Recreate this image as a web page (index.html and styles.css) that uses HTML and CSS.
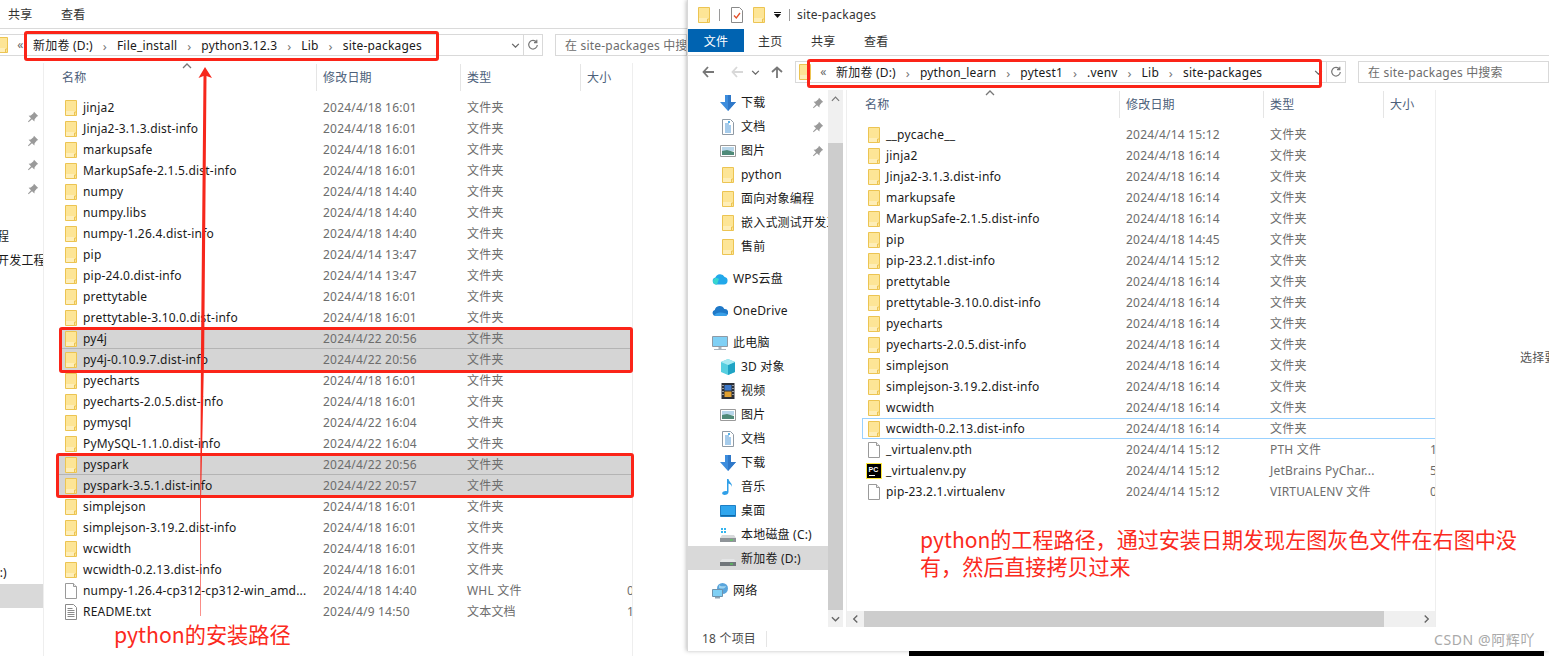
FILE: index.html
```html
<!DOCTYPE html>
<html lang="zh-CN">
<head>
<meta charset="utf-8">
<title>site-packages</title>
<link rel="stylesheet" href="styles.css">
</head>
<body>
<svg class="defs" width="0" height="0" aria-hidden="true">
  <symbol id="folder" viewBox="0 0 12 16"><path d="M.5.5h11v15H.5z" fill="#fde596" stroke="#ecc452"/><path d="M1 11h9v4H1z" fill="#feeeb8"/><path d="M9.5 15v-3h2" fill="none" stroke="#ecc452"/></symbol>
  <symbol id="file" viewBox="0 0 12 16"><path d="M.5.5h8l3 3v12H.5z" fill="#fff" stroke="#9a9a9a"/><path d="M8.5.5v3h3" fill="#eee" stroke="#9a9a9a"/></symbol>
  <symbol id="txt" viewBox="0 0 12 16"><path d="M.5.5h8l3 3v12H.5z" fill="#fff" stroke="#8a8a8a"/><path d="M2.5 4.5h5M2.5 6.5h7M2.5 8.5h7M2.5 10.5h7M2.5 12.5h7" stroke="#8a8a8a"/></symbol>
  <symbol id="pin" viewBox="0 0 12 12"><path d="M7 .8l4.2 4.2-1.3.6-2.3 2.6-.2 2.2L5 8.2 1.6 11.2 1 10.6l3-3.4L1.6 4.8l2.2-.2 2.6-2.3z" fill="#9a9a9a"/></symbol>
  <symbol id="dl" viewBox="0 0 16 16"><path d="M5 0h6v7h5l-8 9-8-9h5z" fill="#3d8ddd"/><path d="M8 0h3v7h5l-8 9z" fill="#2f78c8"/></symbol>
  <symbol id="doc" viewBox="0 0 16 16"><path d="M2.5.5h8l3 3v12h-11z" fill="#fff" stroke="#8f9aa5"/><path d="M5 5h4M5 7h6M5 9h6M5 11h6M5 13h6" stroke="#4d97d6"/><path d="M8 2h2v2H8z" fill="#58b0e6"/></symbol>
  <symbol id="pic" viewBox="0 0 16 16"><path d="M.5 2.5h15v11H.5z" fill="#fff" stroke="#9a9a9a"/><path d="M2 4h12v4H2z" fill="#b8d6ea"/><path d="M2 8l5-1 7 2v3H2z" fill="#4f8a78"/></symbol>
  <symbol id="wps" viewBox="0 0 16 12"><path d="M4 11.5a3.5 3.5 0 0 1-.6-6.9A5 5 0 0 1 12.6 4 3.8 3.8 0 0 1 12 11.5z" fill="#22a8ea"/><path d="M1 8a3.5 3.5 0 0 1 6-2l-2 5.500H4A3.500 3.500 0 0 1 1 8z" fill="#38d6d0"/></symbol>
  <symbol id="onedrive" viewBox="0 0 16 11"><path d="M3.500 10.500a3 3 0 0 1-.7-5.900A5 5 0 0 1 12.300 3.500a3.500 3.500 0 0 1 .7 7z" fill="#1f79c8"/><path d="M2 10c2-3 6-4 12-2 2 1 1 2.500-1 2.500H3.500z" fill="#3aa0e8"/></symbol>
  <symbol id="pc" viewBox="0 0 16 16"><path d="M.5 1.500h15v10H.5z" fill="#7fd0f5" stroke="#8f9aa5"/><path d="M6.500 12h3v2h-3z" fill="#a9b4bd"/><path d="M2 14h12v1H2z" fill="#a9b4bd"/></symbol>
  <symbol id="cube" viewBox="0 0 16 16"><path d="M8 0l7 3v10l-7 3-7-3V3z" fill="#56cfe0"/><path d="M8 6l7-3v10l-7 3z" fill="#1fa3c4"/><path d="M8 0l7 3-7 3-7-3z" fill="#a6eaf2"/></symbol>
  <symbol id="video" viewBox="0 0 16 16"><path d="M1.500 0h13v16h-13z" fill="#2c3038"/><path d="M4.500 2h7v5.500h-7z" fill="#3d78c9"/><path d="M4.500 8.500h7V14h-7z" fill="#e0a030"/><path d="M2.500 2h1v1h-1zM2.500 5h1v1h-1zM2.500 8h1v1h-1zM2.500 11h1v1h-1zM12.500 2h1v1h-1zM12.500 5h1v1h-1zM12.500 8h1v1h-1zM12.500 11h1v1h-1z" fill="#fff"/></symbol>
  <symbol id="music" viewBox="0 0 16 16"><path d="M7 0h1.500c.5 3 4 4 3.500 8-.2-1.800-1.800-3-3.500-3.500V13c0 2-2 3-4 3-2.500 0-3-2-1.500-3.200C4.200 12 6 11.800 7 12.300z" fill="#2f9fe8"/></symbol>
  <symbol id="desk" viewBox="0 0 16 16"><path d="M.5 2.500h15v11H.5z" fill="#2fa6ee" stroke="#1f7fc4"/><path d="M1 12h14v1H1z" fill="#0f6aa8"/></symbol>
  <symbol id="diskc" viewBox="0 0 16 16"><path d="M1 1h2v2H1zM4 1h2v2H4zM1 4h2v2H1zM4 4h2v2H4z" fill="#33b5f0"/><path d="M2 8h12l2 3H0z" fill="#d8dadc"/><path d="M0 11h16v4H0z" fill="#8f9499"/><path d="M10 12.500h3v1h-3z" fill="#4be04b"/></symbol>
  <symbol id="diskd" viewBox="0 0 16 16"><path d="M2 8h12l2 3H0z" fill="#e4e5e6"/><path d="M0 11h16v4H0z" fill="#70757a"/><path d="M10 12.500h3v1h-3z" fill="#4be04b"/></symbol>
  <symbol id="net" viewBox="0 0 16 16"><circle cx="10.500" cy="5.500" r="5.500" fill="#5aa5dc"/><path d="M7 2c2 2 5 1 7 1-1 3-4 3-7 2z" fill="#9ed4f0"/><path d="M.5 6.500h10v7H.5z" fill="#7fd0f5" stroke="#6f93ad"/><path d="M3 14h5v1.500H3z" fill="#8da3b3"/></symbol>
  <symbol id="up" viewBox="0 0 10 6"><path d="M1 5l4-4 4 4" fill="none" stroke="#777" stroke-width="1.300"/></symbol>
  <symbol id="down" viewBox="0 0 10 6"><path d="M1 1l4 4 4-4" fill="none" stroke="#666" stroke-width="1.500"/></symbol>
  <symbol id="back" viewBox="0 0 12 12"><path d="M6 1L1.500 6 6 11M1.500 6H12" fill="none" stroke="currentColor" stroke-width="1.800"/></symbol>
  <symbol id="upa" viewBox="0 0 12 12"><path d="M1 6l5-4.500L11 6M6 1.500V12" fill="none" stroke="#777" stroke-width="1.800"/></symbol>
  <symbol id="refresh" viewBox="0 0 12 12"><path d="M9.500 3.200A4.300 4.300 0 1 0 10.300 6M9.800 .8v2.800H7" fill="none" stroke="#777" stroke-width="1.200"/></symbol>
  <symbol id="check" viewBox="0 0 12 16"><path d="M.5.5h8l3 3v12H.5z" fill="#fff" stroke="#8a8a8a"/><path d="M3 8.500l2.300 2.500L9 6" fill="none" stroke="#e2502a" stroke-width="1.300"/></symbol>
  <symbol id="qat" viewBox="0 0 9 6"><path d="M1 0h7v1H1zM1 2h7L4.500 6z" fill="#111"/></symbol>
</svg>

<section class="window window-left">
  <div class="titlebar"></div>
  <div class="tabs">
    <span class="tab tab-file tab-off"></span><span class="tab"></span><span class="tab">共享</span><span class="tab">查看</span>
  </div>
  <div class="toolbar">
    <div class="tool-nav"></div>
    <div class="address">
      <svg class="addr-folder"><use href="#folder"/></svg>
      <span class="addr-more">«</span>
      <div class="crumbs">
        <span>新加卷 (D:)</span><i>›</i><span>File_install</span><i>›</i><span>python3.12.3</span><i>›</i><span>Lib</span><i>›</i><span>site-packages</span>
      </div>
      <svg class="addr-drop"><use href="#down"/></svg>
      <span class="addr-refresh"><svg><use href="#refresh"/></svg></span>
    </div>
    <div class="search">在 site-packages 中搜索</div>
  </div>
  <div class="main">
    <nav class="nav nav-left">
      <div class="nav-row"><svg class="pin"><use href="#pin"/></svg></div>
      <div class="nav-row"><svg class="pin"><use href="#pin"/></svg></div>
      <div class="nav-row"><svg class="pin"><use href="#pin"/></svg></div>
      <div class="nav-row"><svg class="pin"><use href="#pin"/></svg></div>
      <div class="nav-row"></div>
      <div class="nav-row"><span>面向对象编程</span></div>
      <div class="nav-row"><span>嵌入式测试开发工程</span></div>
      <div class="nav-row"></div>
      <div class="nav-row nav-gap"></div>
      <div class="nav-row nav-gap"></div>
      <div class="nav-row nav-gap"></div>
      <div class="nav-row"></div>
      <div class="nav-row"></div>
      <div class="nav-row"></div>
      <div class="nav-row"></div>
      <div class="nav-row"></div>
      <div class="nav-row"></div>
      <div class="nav-row"></div>
      <div class="nav-row"><span>本地磁盘 (C:)</span></div>
      <div class="nav-row nav-sel"></div>
    </nav>
    <div class="content">
      <div class="head">
        <span class="hcell hcell-name">名称<svg class="sort"><use href="#up"/></svg></span><span class="hcell hcell-date">修改日期</span><span class="hcell hcell-type">类型</span><span class="hcell hcell-size">大小</span>
      </div>
      <div class="list">
        <div class="row"><span class="name"><svg class="ic"><use href="#folder"/></svg>jinja2</span><span class="meta">2024/4/18 16:01</span><span class="meta">文件夹</span></div>
        <div class="row"><span class="name"><svg class="ic"><use href="#folder"/></svg>Jinja2-3.1.3.dist-info</span><span class="meta">2024/4/18 16:01</span><span class="meta">文件夹</span></div>
        <div class="row"><span class="name"><svg class="ic"><use href="#folder"/></svg>markupsafe</span><span class="meta">2024/4/18 16:01</span><span class="meta">文件夹</span></div>
        <div class="row"><span class="name"><svg class="ic"><use href="#folder"/></svg>MarkupSafe-2.1.5.dist-info</span><span class="meta">2024/4/18 16:01</span><span class="meta">文件夹</span></div>
        <div class="row"><span class="name"><svg class="ic"><use href="#folder"/></svg>numpy</span><span class="meta">2024/4/18 14:40</span><span class="meta">文件夹</span></div>
        <div class="row"><span class="name"><svg class="ic"><use href="#folder"/></svg>numpy.libs</span><span class="meta">2024/4/18 14:40</span><span class="meta">文件夹</span></div>
        <div class="row"><span class="name"><svg class="ic"><use href="#folder"/></svg>numpy-1.26.4.dist-info</span><span class="meta">2024/4/18 14:40</span><span class="meta">文件夹</span></div>
        <div class="row"><span class="name"><svg class="ic"><use href="#folder"/></svg>pip</span><span class="meta">2024/4/14 13:47</span><span class="meta">文件夹</span></div>
        <div class="row"><span class="name"><svg class="ic"><use href="#folder"/></svg>pip-24.0.dist-info</span><span class="meta">2024/4/14 13:47</span><span class="meta">文件夹</span></div>
        <div class="row"><span class="name"><svg class="ic"><use href="#folder"/></svg>prettytable</span><span class="meta">2024/4/18 16:01</span><span class="meta">文件夹</span></div>
        <div class="row"><span class="name"><svg class="ic"><use href="#folder"/></svg>prettytable-3.10.0.dist-info</span><span class="meta">2024/4/18 16:01</span><span class="meta">文件夹</span></div>
        <div class="row row-sel row-sel-split"><span class="name"><svg class="ic"><use href="#folder"/></svg>py4j</span><span class="meta">2024/4/22 20:56</span><span class="meta">文件夹</span></div>
        <div class="row row-sel"><span class="name"><svg class="ic"><use href="#folder"/></svg>py4j-0.10.9.7.dist-info</span><span class="meta">2024/4/22 20:56</span><span class="meta">文件夹</span></div>
        <div class="row"><span class="name"><svg class="ic"><use href="#folder"/></svg>pyecharts</span><span class="meta">2024/4/18 16:01</span><span class="meta">文件夹</span></div>
        <div class="row"><span class="name"><svg class="ic"><use href="#folder"/></svg>pyecharts-2.0.5.dist-info</span><span class="meta">2024/4/18 16:01</span><span class="meta">文件夹</span></div>
        <div class="row"><span class="name"><svg class="ic"><use href="#folder"/></svg>pymysql</span><span class="meta">2024/4/22 16:04</span><span class="meta">文件夹</span></div>
        <div class="row"><span class="name"><svg class="ic"><use href="#folder"/></svg>PyMySQL-1.1.0.dist-info</span><span class="meta">2024/4/22 16:04</span><span class="meta">文件夹</span></div>
        <div class="row row-sel row-sel-split"><span class="name"><svg class="ic"><use href="#folder"/></svg>pyspark</span><span class="meta">2024/4/22 20:56</span><span class="meta">文件夹</span></div>
        <div class="row row-sel"><span class="name"><svg class="ic"><use href="#folder"/></svg>pyspark-3.5.1.dist-info</span><span class="meta">2024/4/22 20:57</span><span class="meta">文件夹</span></div>
        <div class="row"><span class="name"><svg class="ic"><use href="#folder"/></svg>simplejson</span><span class="meta">2024/4/18 16:01</span><span class="meta">文件夹</span></div>
        <div class="row"><span class="name"><svg class="ic"><use href="#folder"/></svg>simplejson-3.19.2.dist-info</span><span class="meta">2024/4/18 16:01</span><span class="meta">文件夹</span></div>
        <div class="row"><span class="name"><svg class="ic"><use href="#folder"/></svg>wcwidth</span><span class="meta">2024/4/18 16:01</span><span class="meta">文件夹</span></div>
        <div class="row"><span class="name"><svg class="ic"><use href="#folder"/></svg>wcwidth-0.2.13.dist-info</span><span class="meta">2024/4/18 16:01</span><span class="meta">文件夹</span></div>
        <div class="row"><span class="name"><svg class="ic"><use href="#file"/></svg>numpy-1.26.4-cp312-cp312-win_amd...</span><span class="meta">2024/4/18 14:40</span><span class="meta">WHL 文件</span><span class="meta">0</span></div>
        <div class="row"><span class="name"><svg class="ic"><use href="#txt"/></svg>README.txt</span><span class="meta">2024/4/9 14:50</span><span class="meta">文本文档</span><span class="meta">1</span></div>
      </div>
    </div>
  </div>
</section>

<section class="window window-right">
  <div class="titlebar">
    <svg class="ic qat-first"><use href="#folder"/></svg><span class="qat-sep"></span>
    <svg class="ic"><use href="#check"/></svg>
    <svg class="ic"><use href="#folder"/></svg>
    <svg class="qat-arrow"><use href="#qat"/></svg><span class="qat-sep qat-sep-last"></span>
    <span class="title">site-packages</span>
  </div>
  <div class="tabs">
    <span class="tab tab-file">文件</span><span class="tab">主页</span><span class="tab">共享</span><span class="tab">查看</span>
  </div>
  <div class="toolbar">
    <div class="tool-nav">
      <svg class="tn tn-back"><use href="#back"/></svg>
      <svg class="tn tn-fwd"><use href="#back"/></svg>
      <svg class="tn-drop"><use href="#down"/></svg>
      <svg class="tn"><use href="#upa"/></svg>
    </div>
    <div class="address">
      <svg class="addr-folder"><use href="#folder"/></svg>
      <span class="addr-more">«</span>
      <div class="crumbs">
        <span>新加卷 (D:)</span><i>›</i><span>python_learn</span><i>›</i><span>pytest1</span><i>›</i><span>.venv</span><i>›</i><span>Lib</span><i>›</i><span>site-packages</span>
      </div>
      <svg class="addr-drop"><use href="#down"/></svg>
      <span class="addr-refresh"><svg><use href="#refresh"/></svg></span>
    </div>
    <div class="search">在 site-packages 中搜索</div>
  </div>
  <div class="main">
    <nav class="nav nav-right">
      <div class="nav-row lv1"><svg class="ni"><use href="#dl"/></svg><span>下载</span><svg class="pin"><use href="#pin"/></svg></div>
      <div class="nav-row lv1"><svg class="ni"><use href="#doc"/></svg><span>文档</span><svg class="pin"><use href="#pin"/></svg></div>
      <div class="nav-row lv1"><svg class="ni"><use href="#pic"/></svg><span>图片</span><svg class="pin"><use href="#pin"/></svg></div>
      <div class="nav-row lv1"><svg class="ni ni-folder"><use href="#folder"/></svg><span>python</span></div>
      <div class="nav-row lv1"><svg class="ni ni-folder"><use href="#folder"/></svg><span>面向对象编程</span></div>
      <div class="nav-row lv1"><svg class="ni ni-folder"><use href="#folder"/></svg><span>嵌入式测试开发工程</span></div>
      <div class="nav-row lv1"><svg class="ni ni-folder"><use href="#folder"/></svg><span>售前</span></div>
      <div class="nav-row lv0 nav-gap"><svg class="ni"><use href="#wps"/></svg><span>WPS云盘</span></div>
      <div class="nav-row lv0 nav-gap"><svg class="ni"><use href="#onedrive"/></svg><span>OneDrive</span></div>
      <div class="nav-row lv0 nav-gap"><svg class="ni"><use href="#pc"/></svg><span>此电脑</span></div>
      <div class="nav-row lv1"><svg class="ni"><use href="#cube"/></svg><span>3D 对象</span></div>
      <div class="nav-row lv1"><svg class="ni"><use href="#video"/></svg><span>视频</span></div>
      <div class="nav-row lv1"><svg class="ni"><use href="#pic"/></svg><span>图片</span></div>
      <div class="nav-row lv1"><svg class="ni"><use href="#doc"/></svg><span>文档</span></div>
      <div class="nav-row lv1"><svg class="ni"><use href="#dl"/></svg><span>下载</span></div>
      <div class="nav-row lv1"><svg class="ni"><use href="#music"/></svg><span>音乐</span></div>
      <div class="nav-row lv1"><svg class="ni"><use href="#desk"/></svg><span>桌面</span></div>
      <div class="nav-row lv1"><svg class="ni"><use href="#diskc"/></svg><span>本地磁盘 (C:)</span></div>
      <div class="nav-row lv1 nav-sel"><svg class="ni"><use href="#diskd"/></svg><span>新加卷 (D:)</span></div>
      <div class="nav-row lv0 nav-gap"><svg class="ni"><use href="#net"/></svg><span>网络</span></div>
    </nav>
    <div class="vscroll">
      <span class="sb-btn"><svg class="sb-ch"><use href="#up"/></svg></span>
      <span class="sb-track"></span>
      <span class="sb-thumb"></span>
      <span class="sb-btn"><svg class="sb-ch"><use href="#down"/></svg></span>
    </div>
    <div class="content">
      <div class="head">
        <span class="hcell hcell-name">名称<svg class="sort"><use href="#up"/></svg></span><span class="hcell hcell-date">修改日期</span><span class="hcell hcell-type">类型</span><span class="hcell hcell-size">大小</span>
      </div>
      <div class="list">
        <div class="row"><span class="name"><svg class="ic"><use href="#folder"/></svg>__pycache__</span><span class="meta">2024/4/14 15:12</span><span class="meta">文件夹</span></div>
        <div class="row"><span class="name"><svg class="ic"><use href="#folder"/></svg>jinja2</span><span class="meta">2024/4/18 16:14</span><span class="meta">文件夹</span></div>
        <div class="row"><span class="name"><svg class="ic"><use href="#folder"/></svg>Jinja2-3.1.3.dist-info</span><span class="meta">2024/4/18 16:14</span><span class="meta">文件夹</span></div>
        <div class="row"><span class="name"><svg class="ic"><use href="#folder"/></svg>markupsafe</span><span class="meta">2024/4/18 16:14</span><span class="meta">文件夹</span></div>
        <div class="row"><span class="name"><svg class="ic"><use href="#folder"/></svg>MarkupSafe-2.1.5.dist-info</span><span class="meta">2024/4/18 16:14</span><span class="meta">文件夹</span></div>
        <div class="row"><span class="name"><svg class="ic"><use href="#folder"/></svg>pip</span><span class="meta">2024/4/18 14:45</span><span class="meta">文件夹</span></div>
        <div class="row"><span class="name"><svg class="ic"><use href="#folder"/></svg>pip-23.2.1.dist-info</span><span class="meta">2024/4/14 15:12</span><span class="meta">文件夹</span></div>
        <div class="row"><span class="name"><svg class="ic"><use href="#folder"/></svg>prettytable</span><span class="meta">2024/4/18 16:14</span><span class="meta">文件夹</span></div>
        <div class="row"><span class="name"><svg class="ic"><use href="#folder"/></svg>prettytable-3.10.0.dist-info</span><span class="meta">2024/4/18 16:14</span><span class="meta">文件夹</span></div>
        <div class="row"><span class="name"><svg class="ic"><use href="#folder"/></svg>pyecharts</span><span class="meta">2024/4/18 16:14</span><span class="meta">文件夹</span></div>
        <div class="row"><span class="name"><svg class="ic"><use href="#folder"/></svg>pyecharts-2.0.5.dist-info</span><span class="meta">2024/4/18 16:14</span><span class="meta">文件夹</span></div>
        <div class="row"><span class="name"><svg class="ic"><use href="#folder"/></svg>simplejson</span><span class="meta">2024/4/18 16:14</span><span class="meta">文件夹</span></div>
        <div class="row"><span class="name"><svg class="ic"><use href="#folder"/></svg>simplejson-3.19.2.dist-info</span><span class="meta">2024/4/18 16:14</span><span class="meta">文件夹</span></div>
        <div class="row"><span class="name"><svg class="ic"><use href="#folder"/></svg>wcwidth</span><span class="meta">2024/4/18 16:14</span><span class="meta">文件夹</span></div>
        <div class="row row-hover"><span class="name"><svg class="ic"><use href="#folder"/></svg>wcwidth-0.2.13.dist-info</span><span class="meta">2024/4/18 16:14</span><span class="meta">文件夹</span></div>
        <div class="row"><span class="name"><svg class="ic"><use href="#file"/></svg>_virtualenv.pth</span><span class="meta">2024/4/14 15:12</span><span class="meta">PTH 文件</span><span class="meta">1</span></div>
        <div class="row"><span class="name"><svg class="ic-pc" viewBox="0 0 16 16"><rect x=".5" y=".5" width="15" height="15" fill="#000" stroke="#ffe93b"/><text x="2.500" y="8.500" class="pc-label">PC</text><rect x="3" y="12" width="6" height="1" fill="#fff"/></svg>_virtualenv.py</span><span class="meta">2024/4/14 15:12</span><span class="meta">JetBrains PyChar...</span><span class="meta">5</span></div>
        <div class="row"><span class="name"><svg class="ic"><use href="#file"/></svg>pip-23.2.1.virtualenv</span><span class="meta">2024/4/14 15:12</span><span class="meta">VIRTUALENV 文件</span><span class="meta">0</span></div>
      </div>
      <div class="hscroll">
        <span class="sb-btn"><svg class="sb-ch sb-ch-side"><use href="#down"/></svg></span>
        <span class="hs-thumb"></span>
        <span class="hs-track"><svg class="sb-ch sb-ch-next"><use href="#down"/></svg></span>
      </div>
    </div>
    <div class="preview">选择要</div>
  </div>
  <div class="status"><span class="status-count">18 个项目</span></div>
</section>

<svg class="arrow" viewBox="0 0 1549 656" aria-hidden="true">
  <polygon points="205,67 212,78 206.500,76 204.200,350 201,500 200.700,616 200.200,616 200.200,500 201,350 203.500,76 198.500,78"/>
</svg>
<div class="redbox box-a"></div>
<div class="redbox box-b"></div>
<div class="redbox box-c"></div>
<div class="redbox box-d"></div>
<p class="note note-left">python的安装路径</p>
<p class="note note-right">python的工程路径，通过安装日期发现左图灰色文件在右图中没<br>有，然后直接拷贝过来</p>
<div class="strip"></div>
<div class="watermark">CSDN @阿辉吖</div>
</body>
</html>
```
FILE: styles.css
```css
* { box-sizing: border-box; }
html, body { margin: 0; padding: 0; }
body {
  position: relative;
  width: 1549px;
  height: 656px;
  overflow: hidden;
  background: #fff;
  font: 12px/16px "Noto Sans", "Noto Sans CJK SC", sans-serif;
  letter-spacing: .2px;
  color: #1a1a1a;
}
.defs { position: absolute; }

/* windows on the desktop */
.window {
  position: absolute;
  display: flex;
  flex-direction: column;
  background: #fff;
  overflow: hidden;
}
.window-left { left: -115px; top: -27px; width: 802px; height: 683px; }
.window-right { left: 687px; top: 0; width: 862px; height: 651px; border-left: 1px solid #d8d8d8; box-shadow: -1px 0 4px rgba(0,0,0,.25); }

.titlebar { height: 29px; flex: none; display: flex; align-items: center; }
.title { color: #333; font-size: 12px; }
.titlebar .ic { margin-right: 0; }
.qat-first { margin-left: 10px; }
.qat-sep { width: 1px; height: 12px; background: #9a9a9a; margin: 0 11px 0 9px; }
.qat-sep-last { margin-right: 7px; }
.qat-arrow { width: 9px; height: 6px; margin: 0 -2px 0 8px; }
.titlebar .ic + .ic { margin-left: 10px; }

.tabs { height: 27px; flex: none; display: flex; border-bottom: 1px solid #dadada; padding-bottom: 3px; }
.tab { width: 24px; margin-right: 29px; text-align: center; line-height: 25px; color: #333; white-space: nowrap; }
.tab-file { width: 56px; margin-right: 14px; background: #0063b1; color: #fff; }
.tab-off { background: transparent; }

.toolbar { height: 34px; flex: none; display: flex; padding-top: 5px; align-items: flex-start; }
.tool-nav { width: 107px; flex: none; height: 22px; display: flex; align-items: center; padding-left: 14px; }
.tn { width: 12px; height: 12px; color: #777; }
.tn-fwd { color: #d8d8d8; margin-left: 17px; }
.tn-drop { width: 9px; height: 5px; margin: 0 11px 0 8px; }
.address {
  width: 551px; height: 22px; flex: none;
  display: flex; align-items: center;
  border: 1px solid #d9d9d9;
  padding-left: 3px;
}
.addr-folder { width: 12px; height: 16px; flex: none; }
.addr-more { width: 25px; text-align: center; color: #666; flex: none; }
.crumbs { flex: 1; display: flex; align-items: center; white-space: nowrap; padding-top: 1px; }
.crumbs i { width: 24px; text-align: center; font-style: normal; color: #777; font-size: 13px; }
.addr-drop { width: 9px; height: 5px; flex: none; margin-right: 3px; }
.addr-refresh { width: 19px; height: 20px; border-left: 1px solid #d9d9d9; display: flex; align-items: center; justify-content: center; flex: none; }
.addr-refresh svg { width: 12px; height: 12px; }
.search {
  flex: 1; height: 22px; margin-left: 12px;
  border: 1px solid #d9d9d9;
  padding: 3px 0 0 9px;
  color: #6d6d6d;
  white-space: nowrap;
  overflow: hidden;
}

.main { flex: 1; display: flex; min-height: 0; }

/* navigation pane */
.nav { flex: none; overflow: hidden; white-space: nowrap; }
.nav-left { width: 158px; padding-top: 41px; }
.nav-right { width: 140px; }
.nav-row { height: 24px; display: flex; align-items: center; padding-top: 2px; }
.nav-left .nav-row { padding-left: 51px; }
.nav-gap { margin-top: 8px; }
.nav-sel { background: #d9d9d9; }
.lv0 { padding-left: 24px; }
.lv1 { padding-left: 32px; }
.ni { width: 16px; height: 16px; margin-right: 5px; flex: none; }
.pin { width: 12px; height: 12px; margin-left: auto; margin-right: 4px; flex: none; }

.vscroll { width: 15px; flex: none; display: grid; grid-template-rows: 17px 36px 1fr 17px; margin-right: 3px; background: #f0f0f0; }
.sb-btn { display: flex; align-items: center; justify-content: center; background: #f0f0f0; }
.sb-thumb { background: #cdcdcd; }
.sb-ch { width: 9px; height: 6px; }
.sb-ch-side { transform: rotate(90deg); }
.sb-ch-next { transform: rotate(-90deg); margin-left: auto; margin-right: 4px; }

/* details list */
.content {
  width: 590px; flex: none;
  display: flex; flex-direction: column;
  border-left: 1px solid #eeeeee;
  border-right: 1px solid #eeeeee;
  position: relative;
  overflow: hidden;
}
.head { display: flex; height: 27px; margin-top: 1px; flex: none; color: #4c607a; }
.hcell { display: flex; align-items: center; border-right: 1px solid #e5e5e5; padding: 1px 0 0 6px; }
.hcell-name { width: 273px; padding-left: 18px; }
.hcell-date { width: 144px; }
.hcell-type { width: 120px; }
.hcell-size { border-right: 0; }
.sort { position: absolute; left: 138px; top: 0; width: 10px; height: 6px; }
.list { flex: 1; min-height: 0; padding: 6px 0 0 15px; }
.row {
  display: grid;
  grid-template-columns: 258px 144px 160px 1fr;
  height: 21px;
  width: 574px;
  align-items: center;
  padding-left: 6px;
  white-space: nowrap;
  overflow: hidden;
}
.name { display: flex; align-items: center; }
.meta { color: #6d6d6d; }
.ic { width: 12px; height: 16px; margin-right: 6px; flex: none; }
.ic-pc { width: 16px; height: 16px; margin: 0 4px 0 -2px; flex: none; }
.pc-label { font: 700 7px "Liberation Sans", sans-serif; fill: #fff; }
.row-sel { background: #d5d5d5; }
.row-sel-split { box-shadow: inset 0 -1px 0 #b4b4b4; }
.row-hover { box-shadow: inset 0 0 0 1px #99d1ff; }

.hscroll { height: 16px; flex: none; display: grid; grid-template-columns: 17px 520px 1fr; }
.hs-thumb { background: #cdcdcd; }
.hs-track { background: #f0f0f0; display: flex; align-items: center; }

.preview { flex: 1; padding: 260px 0 0 84px; color: #555; white-space: nowrap; overflow: hidden; }
.status { height: 24px; flex: none; display: flex; align-items: center; padding-left: 14px; color: #4c4c4c; }
.status-count { padding-right: 10px; border-right: 1px solid #e5e5e5; }

/* annotations lying over the screenshots */
.arrow { position: absolute; left: 0; top: 0; width: 1549px; height: 656px; pointer-events: none; }
.arrow polygon { fill: #f6271c; }
.redbox { position: absolute; border: 3px solid #fb2418; border-radius: 3px; }
.box-a { left: 24px; top: 31px; width: 415px; height: 30px; }
.box-b { left: 59px; top: 327px; width: 574px; height: 46px; }
.box-c { left: 56px; top: 453px; width: 578px; height: 45px; }
.box-d { left: 807px; top: 59px; width: 515px; height: 29px; }
.note { position: absolute; margin: 0; color: #fb2a20; font-family: "Noto Sans CJK SC", sans-serif; letter-spacing: 0; white-space: nowrap; }
.note-left { left: 114px; top: 620px; font-size: 21.2px; line-height: 28px; }
.note-right { left: 920px; top: 526px; font-size: 21.07px; line-height: 27px; }
.strip { position: absolute; left: 909px; top: 651px; right: 5px; height: 5px; background: #000; }
.watermark { position: absolute; left: 1434px; top: 631px; font-size: 14px; letter-spacing: .6px; line-height: 18px; color: #a9a9a9; white-space: nowrap; }
```
